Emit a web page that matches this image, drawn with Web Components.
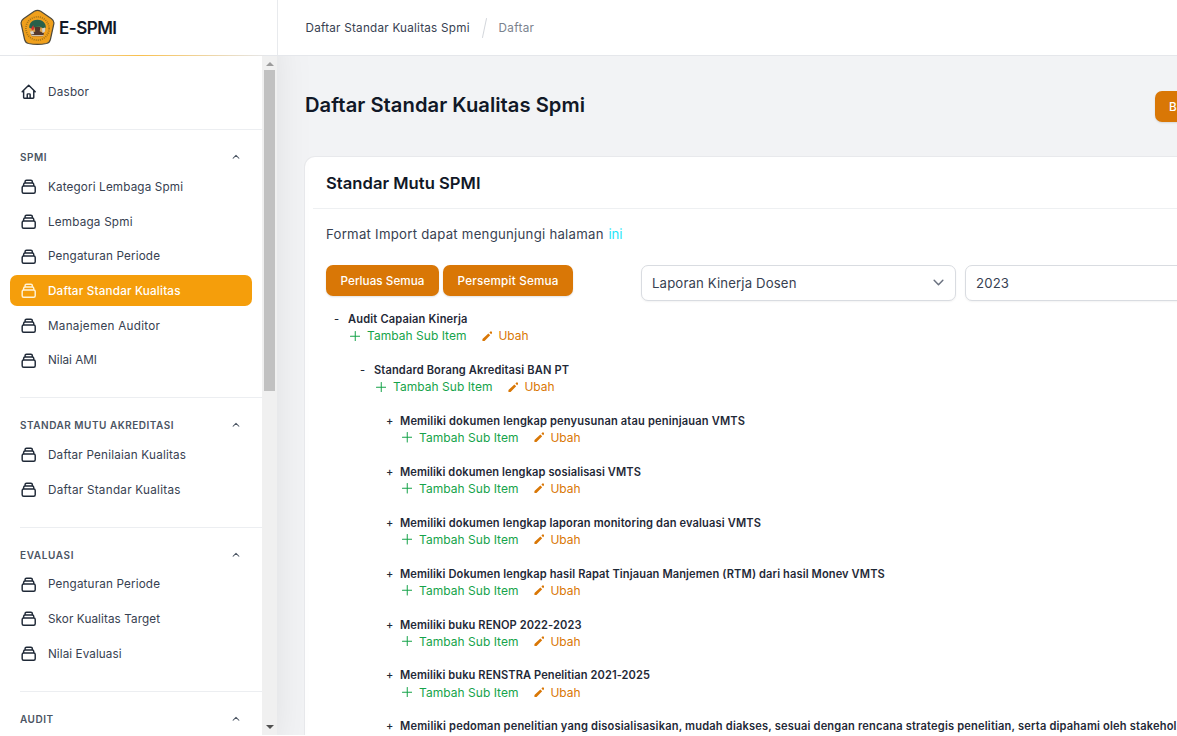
<!DOCTYPE html>
<html lang="id">
<head>
<meta charset="utf-8">
<title>E-SPMI</title>
<style>
html,body{margin:0;height:100%;overflow:hidden;background:#fff}
body{font-family:Inter,"Liberation Sans",sans-serif}
</style>
</head>
<body>
<spmi-app></spmi-app>
<script>
const define = (name, html, ready) => customElements.define(name, class extends HTMLElement {
  connectedCallback() {
    if (this.shadowRoot) return;
    const root = this.attachShadow({mode: 'open'});
    root.innerHTML = typeof html === 'function' ? html(this) : html;
    if (ready) ready(this, root);
  }
});

/* A single line of text, tracked so that it spans the width given in "w". */
define('fit-text', `<style>:host{display:inline-block;white-space:nowrap;flex:none}span{display:inline-block}</style><span><slot></slot></span>`, (el, root) => {
  const w = parseFloat(el.getAttribute('w'));
  if (!w) return;
  const n = el.textContent.length;
  const natural = root.querySelector('span').getBoundingClientRect().width;
  el.style.letterSpacing = ((w - natural) / Math.max(1, n - 1)).toFixed(4) + 'px';
  el.style.width = w + 'px';
});

const icons = {
  home: '<path d="M3 12l2-2m0 0l7-7 7 7M5 10v10a1 1 0 0 0 1 1h3m10-11l2 2m-2-2v10a1 1 0 0 1-1 1h-3m-6 0a1 1 0 0 0 1-1v-4a1 1 0 0 1 1-1h2a1 1 0 0 1 1 1v4a1 1 0 0 0 1 1m-6 0h6"/>',
  stack: '<path d="M19 11H5m14 0a2 2 0 0 1 2 2v6a2 2 0 0 1-2 2H5a2 2 0 0 1-2-2v-6a2 2 0 0 1 2-2m14 0V9a2 2 0 0 0-2-2M5 11V9a2 2 0 0 1 2-2m0 0V5a2 2 0 0 1 2-2h6a2 2 0 0 1 2 2v2M7 7h10"/>',
  up: '<path d="M5 15l7-7 7 7"/>',
  down: '<path d="M4 8l8 8 8-8"/>',
  plus: '<path d="M12 1v22M1 12h22"/>',
  pencil: '<path fill="currentColor" stroke="none" d="M17 3.500l2.300-2.300a1.600 1.600 0 0 1 2.300 0l1.400 1.400a1.600 1.600 0 0 1 0 2.300l-2.300 2.300zM14.500 5.500l4.200 4.200L5.700 23H1v-4.500z"/>'
};
define('ui-icon', el => `<style>:host{display:block;flex:none;width:${el.getAttribute('size')}px;height:${el.getAttribute('size')}px}svg{display:block;width:100%;height:100%}</style>
<svg viewBox="0 0 24 24" fill="none" stroke="currentColor" stroke-width="${el.getAttribute('stroke') || 2}" stroke-linecap="round" stroke-linejoin="round">${icons[el.getAttribute('name')]}</svg>`);

define('brand-logo', `<style>:host{display:block;flex:none;width:35px;height:37px}svg{display:block}</style>
<svg width="35" height="37" viewBox="0 0 35 37">
<path d="M14.300 2.300Q17.500.3 20.700 2.300L31.500 9.800Q34.500 12 33.800 15L30.400 30.500Q29.600 33.700 26.500 34.500Q17.500 36.400 8.500 34.500Q5.400 33.700 4.600 30.500L1.200 15Q.5 12 3.500 9.800Z" fill="#f0a01c" stroke="#4f4a3c" stroke-width="1.200"/>
<circle cx="17.500" cy="19.500" r="11.600" fill="none" stroke="#8a6419" stroke-width="1.700" stroke-dasharray="1 1.100" opacity=".75"/>
<circle cx="17.500" cy="19" r="8.300" fill="#d9a04a"/>
<path d="M9.300 19c-.6-5 3.400-8.300 8.200-8.300s8.700 3.300 8.300 8l-2.800.6-3-1.500-5 .2-2.500 1.600z" fill="#28604a"/>
<path d="M14.500 18h6l-.8 4.200 4.300 2-1 3H12l-1.500-2.700 4.800-2z" fill="#54382c"/>
<path d="M11 19.700l2.300-3.700.9 4-1.500 1.500z" fill="#d8322b"/>
<path d="M10 22.800l3-.8 1.300 3-3.300.6zM22 19.500l3-1v4l-2.500 1.500z" fill="#d5d3cd"/>
<path d="M11.500 26.600h12" stroke="#e8e1cf" stroke-width=".9"/>
</svg>`);

define('top-bar', `<style>
:host{display:flex;flex:none;height:55px;border-bottom:1px solid #e5e7eb;background:#fff;position:relative;z-index:3}
.brand{box-sizing:border-box;width:277.500px;border-right:1px solid #e8eaed;display:flex;align-items:center;padding-left:20px;gap:4px;flex:none;position:relative;font-size:17px;font-weight:600;color:#111827}
.glow{position:absolute;left:0;right:0;bottom:-1px;height:1px;background:linear-gradient(90deg,#e5e7eb 8%,#f9c04e 50%,#e5e7eb 96%)}
nav{display:flex;align-items:center;padding-left:28px;font-size:11.700px;color:#374151}
i{width:1px;height:20px;background:#d4d7dc;transform:rotate(12deg);margin:0 14px}
.m{color:#7b828e}
</style>
<div class="brand"><brand-logo></brand-logo><fit-text w="58">E-SPMI</fit-text><div class="glow"></div></div>
<nav><fit-text w="164">Daftar Standar Kualitas Spmi</fit-text><i></i><fit-text class="m" w="35.500">Daftar</fit-text></nav>`);

define('nav-item', el => `<style>
:host{display:flex;height:34.740px;align-items:center;padding:0 10.500px 0 10px}
div{flex:1;height:31px;display:flex;align-items:center;gap:10.600px;padding-left:10px;border-radius:7px;font-size:11.700px;color:#374151}
ui-icon{color:#1f2937}
:host([active]) div{background:#f59e0b;color:#fff;font-weight:500}
:host([active]) ui-icon{color:#fff3d6}
</style><div><ui-icon size="17.400" stroke="2" name="${el.getAttribute('icon') || 'stack'}"></ui-icon><fit-text w="${el.getAttribute('w')}">${el.getAttribute('label')}</fit-text></div>`);

define('nav-group', el => `<style>
:host{display:block;margin-top:19.400px}
header{box-sizing:border-box;height:40.500px;margin-left:20px;border-top:1px solid #eceef1;padding:15px 21px 0 0;display:flex;justify-content:space-between;align-items:center;font-size:10px;font-weight:600;color:#4b5563}
</style><header><fit-text w="${el.getAttribute('w')}">${el.getAttribute('label')}</fit-text><ui-icon name="up" size="10" stroke="2.500"></ui-icon></header><slot></slot>`);

define('scroll-rail', `<style>
:host{display:flex;flex-direction:column;align-items:center;width:15px;background:#f0f0f0;flex:none}
i{width:0;height:0;border:4px solid transparent}
.u{border-bottom-color:#9c9c9c;border-top:0;margin:6px 0 4px}
.t{width:11.500px;height:321px;background:#c1c1c1}
.d{border-top-color:#505050;border-bottom:0;margin:auto 0 6px}
</style><i class="u"></i><div class="t"></div><i class="d"></i>`);

define('side-bar', `<style>
:host{display:flex;width:277px;flex:none;background:#fff;position:relative;z-index:2}
.shade{position:absolute;inset:-55px 0 0 0;z-index:-1;box-shadow:0 22px 43px -10px rgba(0,0,0,.13)}
nav{flex:1;padding-top:18.800px;overflow:hidden}
</style><div class="shade"></div><nav>
<nav-item icon="home" label="Dasbor" w="41"></nav-item>
<nav-group label="SPMI" w="26.500">
<nav-item label="Kategori Lembaga Spmi" w="135"></nav-item>
<nav-item label="Lembaga Spmi" w="84.500"></nav-item>
<nav-item label="Pengaturan Periode" w="112"></nav-item>
<nav-item active label="Daftar Standar Kualitas" w="132.500"></nav-item>
<nav-item label="Manajemen Auditor" w="112"></nav-item>
<nav-item label="Nilai AMI" w="49"></nav-item>
</nav-group>
<nav-group label="STANDAR MUTU AKREDITASI" w="153.500">
<nav-item label="Daftar Penilaian Kualitas" w="138"></nav-item>
<nav-item label="Daftar Standar Kualitas" w="132.500"></nav-item>
</nav-group>
<nav-group label="EVALUASI" w="53.500">
<nav-item label="Pengaturan Periode" w="112"></nav-item>
<nav-item label="Skor Kualitas Target" w="112"></nav-item>
<nav-item label="Nilai Evaluasi" w="73.500"></nav-item>
</nav-group>
<nav-group label="AUDIT" w="33"></nav-group>
</nav><scroll-rail></scroll-rail>`);

define('ui-button', `<style>
:host{display:flex;box-sizing:border-box;height:31px;align-items:center;justify-content:center;border-radius:7px;background:#d97706;color:#fff;font-size:11.700px;font-weight:500;box-shadow:0 1px 2px rgba(0,0,0,.12);flex:none}
</style><slot></slot>`);

define('ui-select', `<style>
:host{display:flex;box-sizing:border-box;width:315px;height:36px;align-items:center;justify-content:space-between;padding:0 10.500px 0 10px;border:1px solid #d9dce1;border-radius:7px;background:#fff;color:#374151;font-size:13.200px;box-shadow:0 1px 2px rgba(0,0,0,.05);flex:none}
ui-icon{color:#6b7280}
</style><slot></slot><ui-icon name="down" size="13" stroke="2.800"></ui-icon>`);

define('tree-node', el => `<style>
:host{display:block}
.row{height:50.860px;padding-left:8px}
.t{display:flex;align-items:center;height:17.300px;font-size:11.100px;font-weight:600;color:#1f2937}
.s{width:14px;flex:none;font-weight:500;font-size:11px}
.a{display:flex;align-items:center;height:15.800px;padding-left:15.500px;font-size:12px;color:#16a34a}
.a .g{margin:0 15px 0 7px}
.a .u{margin-left:6.500px}.o{color:#d97706}
.kids{padding-left:26px}
</style><div class="row"><div class="t"><span class="s">${el.getAttribute('sign')}</span><fit-text w="${el.getAttribute('w')}">${el.getAttribute('label')}</fit-text></div>
${el.hasAttribute('plain') ? '' : `<div class="a"><ui-icon name="plus" size="10.500" stroke="2.300"></ui-icon><fit-text class="g" w="99.500">Tambah Sub Item</fit-text><ui-icon class="o" name="pencil" size="10.500"></ui-icon><fit-text class="u o" w="30">Ubah</fit-text></div>`}</div>
<div class="kids"><slot></slot></div>`);

define('main-page', `<style>
:host{display:block;flex:1;min-width:0;overflow:hidden;background:#f2f3f5;padding-left:28px}
.head{display:flex;justify-content:space-between;height:100.500px;align-items:flex-start}
.head fit-text{margin-top:34px;font-size:20.200px;line-height:30px;font-weight:600;color:#111827}
.head ui-button{width:90px;margin:35px -68px 0 0;justify-content:flex-start;padding-left:14px}
section{background:#fff;border-radius:10px 0 0 0;height:600px;box-shadow:0 0 0 1px rgba(3,7,18,.04)}
h2{margin:0 0 0 8px;height:51.500px;display:flex;align-items:center;padding-left:13px;border-bottom:1px solid #eef0f2;font-size:16.600px;font-weight:600;color:#111827}
h2 fit-text{padding-top:1px}
p{margin:0 0 0 21px;height:49.500px;display:flex;align-items:center;gap:5px;font-size:13.200px;color:#374151}
p .l{color:#22e5fa}
.cols{display:flex;margin:6px 0 0 21px}
.btns{display:flex;gap:4px;height:36px;width:315px;flex:none}
.btns fit-text{padding-top:1px}
.tree{margin-top:10.300px;margin-left:21px}
ui-select+ui-select{margin-left:9px}
</style>
<div class="head"><fit-text w="280">Daftar Standar Kualitas Spmi</fit-text><ui-button>B</ui-button></div>
<section>
<h2><fit-text w="154.500">Standar Mutu SPMI</fit-text></h2>
<p><fit-text w="277.500">Format Import dapat mengunjungi halaman</fit-text><fit-text class="l" w="14">ini</fit-text></p>
<div class="cols"><div class="btns"><ui-button style="width:113px"><fit-text w="84">Perluas Semua</fit-text></ui-button><ui-button style="width:130px"><fit-text w="101">Persempit Semua</fit-text></ui-button></div>
<ui-select><fit-text w="144.500">Laporan Kinerja Dosen</fit-text></ui-select><ui-select><fit-text w="33">2023</fit-text></ui-select></div>
<div class="tree">
<tree-node sign="-" label="Audit Capaian Kinerja" w="119.500">
<tree-node sign="-" label="Standard Borang Akreditasi BAN PT" w="195">
<tree-node sign="+" label="Memiliki dokumen lengkap penyusunan atau peninjauan VMTS" w="345"></tree-node>
<tree-node sign="+" label="Memiliki dokumen lengkap sosialisasi VMTS" w="241"></tree-node>
<tree-node sign="+" label="Memiliki dokumen lengkap laporan monitoring dan evaluasi VMTS" w="361"></tree-node>
<tree-node sign="+" label="Memiliki Dokumen lengkap hasil Rapat Tinjauan Manjemen (RTM) dari hasil Monev VMTS" w="484.500"></tree-node>
<tree-node sign="+" label="Memiliki buku RENOP 2022-2023" w="181.500"></tree-node>
<tree-node sign="+" label="Memiliki buku RENSTRA Penelitian 2021-2025" w="250"></tree-node>
<tree-node plain sign="+" label="Memiliki pedoman penelitian yang disosialisasikan, mudah diakses, sesuai dengan rencana strategis penelitian, serta dipahami oleh stakehol" w="776.500"></tree-node>
</tree-node></tree-node>
</div>
</section>`);

define('spmi-app', `<style>
:host{display:flex;flex-direction:column;width:1177px;height:735px;overflow:hidden}
.body{display:flex;flex:1;min-height:0}
</style><top-bar></top-bar><div class="body"><side-bar></side-bar><main-page></main-page></div>`);
</script>
</body>
</html>
